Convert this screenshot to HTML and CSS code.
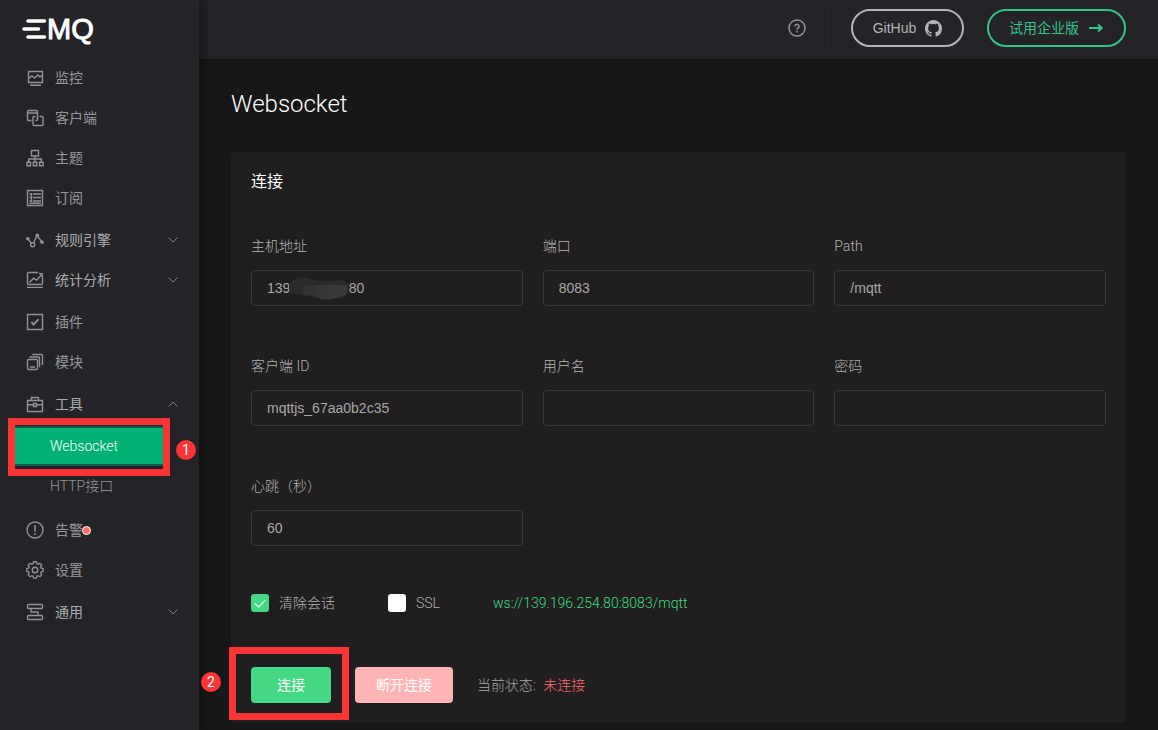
FILE: index.html
```html
<!DOCTYPE html>
<html lang="zh-CN">
<head>
<meta charset="utf-8">
<meta name="viewport" content="width=device-width, initial-scale=1">
<title>EMQ - Websocket</title>
<link rel="stylesheet" href="styles.css">
</head>
<body>
<aside class="sidebar">
  <a class="logo" href="#" aria-label="EMQ">
    <svg class="logo-bars" width="25" height="24" viewBox="0 0 25 24" stroke="#fff" stroke-width="3.600" stroke-linecap="round"><path d="M6 4H22.500M2 12H16.500M6 20H22.500"/></svg>
    <span class="logo-text">MQ</span>
  </a>
  <nav class="menu">
    <div class="group">
      <a class="item" href="#"><svg class="icon" viewBox="0 0 18 18"><path d="M2.500 2.500h14v11h-14zM2.500 9.500l3.500-2.500 2.500 2 3.500-3 2 2 2.500-2M4 16.200h11"/></svg><span>监控</span></a>
      <a class="item" href="#"><svg class="icon" viewBox="0 0 18 18"><path d="M5.500 11.500h-3a1 1 0 0 1-1-1v-8a1 1 0 0 1 1-1h8a1 1 0 0 1 1 1v8a1 1 0 0 1-1 1h-1M1.500 4h10M13.500 7.500h2.500a1 1 0 0 1 1 1v7a1 1 0 0 1-1 1h-8a1 1 0 0 1-1-1v-7a1 1 0 0 1 1-1h1.500"/></svg><span>客户端</span></a>
      <a class="item" href="#"><svg class="icon" viewBox="0 0 18 18"><path d="M5.500 1.500h7v5.500h-7zM9 7v6M2.700 13v-3h12.600v3M1 13.300h3.500v3.400H1zM7.300 13.300h3.500v3.400H7.300zM13.600 13.300h3.500v3.400h-3.500z"/></svg><span>主题</span></a>
      <a class="item" href="#"><svg class="icon" viewBox="0 0 18 18"><path d="M1.500 1.500h15v15h-15zM3.500 5h2M7 5h8M3.500 8.500h2M7 8.500h8M3.500 12h2M7 12h8M3.500 14.300h11.500M5.500 4v9"/></svg><span>订阅</span></a>
    </div>
    <div class="group">
      <a class="item parent" href="#"><svg class="icon" viewBox="0 0 18 18"><path d="M1.500 7.700l4.200 4.800M7.400 12l3.600-7.500 5 6.500"/><circle cx="6.700" cy="13.700" r="2"/><g fill="currentColor" stroke="none"><circle cx="1.800" cy="7.700" r="1.800"/><circle cx="11.300" cy="4.500" r="1.900"/><circle cx="16" cy="11.200" r="1.800"/></g></svg><span>规则引擎</span><svg class="chevron" viewBox="0 0 10 6"><path d="M.7.700L5 5 9.300.700"/></svg></a>
      <a class="item parent" href="#"><svg class="icon" viewBox="0 0 18 18"><path d="M12 1.500H2.500a1 1 0 0 0-1 1v10a1 1 0 0 0 1 1h13a1 1 0 0 0 1-1V6M1 16.400h16M3.500 11.500l4-4.300 3 2 5.500-6M13 2.500l3.300.3-.2 3.200"/></svg><span>统计分析</span><svg class="chevron" viewBox="0 0 10 6"><path d="M.7.700L5 5 9.300.700"/></svg></a>
    </div>
    <div class="group">
      <a class="item" href="#"><svg class="icon" viewBox="0 0 18 18"><path d="M1.500 1.500h15v15h-15z"/><path stroke-width="1.900" d="M5.300 9l2.400 2.500 4.800-5.300"/></svg><span>插件</span></a>
      <a class="item" href="#"><svg class="icon" viewBox="0 0 18 18"><path d="M2.500 6.500h8a1 1 0 0 1 1 1v8a1 1 0 0 1-1 1h-8a1 1 0 0 1-1-1v-8a1 1 0 0 1 1-1zM4 14h5M4 4.500v-.5h8.500a1 1 0 0 1 1 1v8.500h-.5M6.500 1.500h9a1 1 0 0 1 1 1V11h-1M6.500 1.500V2"/></svg><span>模块</span></a>
    </div>
    <div class="group">
      <a class="item parent open" href="#"><svg class="icon" viewBox="0 0 18 18"><path d="M1.500 5.500h15v11h-15zM5.500 5.500V2.500h7v3M1.500 9.800h5.500M11 9.800h5.500M7.500 8.500h3v3h-3z"/></svg><span>工具</span><svg class="chevron" viewBox="0 0 10 6"><path d="M.7 5.300L5 1l4.300 4.300"/></svg></a>
    </div>
    <div class="group submenu">
      <div class="marked">
        <a class="subitem active" href="#">Websocket</a>
        <span class="frame frame-menu"></span>
        <span class="step step-menu">1</span>
      </div>
      <a class="subitem" href="#">HTTP接口</a>
    </div>
    <div class="group">
      <a class="item" href="#"><svg class="icon" viewBox="0 0 18 18"><circle cx="9" cy="9" r="8"/><path stroke-width="1.600" d="M9 4v6.500M9 12.300v1.700"/></svg><span class="dotted">告警<i class="dot"></i></span></a>
      <a class="item" href="#"><svg class="icon" viewBox="0 0 18 18"><path d="M7.500 1.200h3l.5 2.100 1.300.6 1.900-1.100 2 2-1.100 1.900.6 1.300 2 .5v3l-2 .5-.6 1.300 1.100 1.900-2 2-1.900-1.100-1.300.6-.5 2h-3l-.5-2-1.300-.6-1.900 1.100-2-2 1.100-1.900-.6-1.300-2-.5v-3l2-.5.6-1.300-1.100-1.900 2-2 1.900 1.100 1.300-.6z" transform="translate(.5 -.4) scale(.94)"/><circle cx="9" cy="9" r="2.800"/></svg><span>设置</span></a>
    </div>
    <div class="group">
      <a class="item parent" href="#"><svg class="icon" viewBox="0 0 18 18"><rect x="1.500" y="1.500" width="15" height="4" rx="1"/><rect x="1.500" y="12.500" width="15" height="4" rx="1"/><path d="M5 5.500v3.500h7v3.500"/></svg><span>通用</span><svg class="chevron" viewBox="0 0 10 6"><path d="M.7.700L5 5 9.300.700"/></svg></a>
    </div>
  </nav>
</aside>
<div class="page">
  <header class="topbar">
    <button class="help" type="button" aria-label="帮助"><svg width="18" height="18" viewBox="0 0 18 18" fill="none" stroke="currentColor" stroke-width="1.500"><circle cx="9" cy="9" r="8"/><path d="M6.900 7.400a2.100 2 0 1 1 3.300 1.600c-.8.500-1.200.8-1.200 1.700M9 11.800v1.600"/></svg></button>
    <span class="divider"></span>
    <a class="pill pill-github" href="#">GitHub <svg width="17" height="17" viewBox="0 0 16 16" fill="currentColor"><path d="M8 0C3.580 0 0 3.580 0 8c0 3.540 2.290 6.530 5.470 7.590.4.070.55-.17.55-.38 0-.19-.01-.82-.01-1.490-2.010.37-2.530-.49-2.690-.94-.09-.23-.48-.94-.82-1.130-.28-.15-.68-.52-.01-.53.63-.01 1.080.58 1.230.82.72 1.210 1.870.87 2.330.66.070-.52.28-.87.51-1.070-1.780-.2-3.640-.89-3.640-3.950 0-.87.31-1.590.82-2.150-.08-.2-.36-1.020.08-2.120 0 0 .67-.21 2.200.82.640-.18 1.320-.27 2-.27s1.360.09 2 .27c1.530-1.040 2.200-.82 2.200-.82.440 1.100.160 1.920.080 2.120.510.560.820 1.270.820 2.150 0 3.070-1.870 3.750-3.650 3.950.290.250.540.730.540 1.480 0 1.070-.010 1.930-.010 2.200 0 .210.150.460.550.380A8.010 8.010 0 0 0 16 8c0-4.420-3.580-8-8-8z"/></svg></a>
    <a class="pill pill-trial" href="#">试用企业版 <svg width="16" height="12" viewBox="0 0 16 12" fill="none" stroke="currentColor" stroke-width="1.900"><path d="M1 6h12.500M10 2.500l3.800 3.500L10 9.500"/></svg></a>
  </header>
  <main class="main">
    <h1 class="title">Websocket</h1>
    <section class="card">
      <h2 class="card-title">连接</h2>
      <form>
        <div class="fields">
          <div class="field"><label for="host">主机地址</label>
            <div class="input-wrap"><input id="host" type="text" value="139.196.254.80">
            <svg class="smudge" width="62" height="26" viewBox="0 0 62 26"><path fill="#2b292a" d="M0 9Q3 2 14 1l12 3 14 1 13-1 7 4v8q-2 5-10 6l-10 2H34L18 20 6 18 0 17z"/><path fill="#333132" d="M14 9h13v11l-13-2z"/><path fill="#363435" d="M27 9h13v14h-7l-6-2z"/><path fill="#3a3839" d="M40 9h18v8q-3 4-10 5l-8 1z"/></svg></div></div>
          <div class="field"><label for="port">端口</label><input id="port" type="text" value="8083"></div>
          <div class="field"><label for="path">Path</label><input id="path" type="text" value="/mqtt"></div>
          <div class="field"><label for="client">客户端 ID</label><input id="client" type="text" value="mqttjs_67aa0b2c35"></div>
          <div class="field"><label for="user">用户名</label><input id="user" type="text"></div>
          <div class="field"><label for="pass">密码</label><input id="pass" type="password"></div>
          <div class="field"><label for="keep">心跳（秒）</label><input id="keep" type="text" value="60"></div>
        </div>
        <div class="options">
          <label class="check"><input type="checkbox" checked>清除会话</label>
          <label class="check"><input type="checkbox">SSL</label>
          <a class="url" href="#">ws://139.196.254.80:8083/mqtt</a>
        </div>
        <div class="actions">
          <div class="marked">
            <button class="btn btn-connect" type="button">连接</button>
            <span class="frame frame-connect"></span>
            <span class="step step-connect">2</span>
          </div>
          <button class="btn btn-disconnect" type="button">断开连接</button>
          <p class="status">当前状态: <span class="status-value">未连接</span></p>
        </div>
      </form>
    </section>
  </main>
</div>
</body>
</html>
```
FILE: styles.css
```css
* {
  box-sizing: border-box;
}

body {
  display: flex;
  min-height: 100vh;
  margin: 0;
  background: #171717;
  color: #a8a8a9;
  font: 400 14px/20px Roboto, "Noto Sans CJK SC", sans-serif;
}

a {
  color: inherit;
  text-decoration: none;
}

/* Sidebar */
.sidebar {
  position: relative;
  flex: 0 0 199px;
  background: #242428;
  box-shadow: 4px 0 10px rgba(0, 0, 0, 0.35);
}

.logo {
  display: flex;
  align-items: center;
  height: 58px;
  padding-left: 22px;
  color: #fff;
}

.logo-text {
  font: 400 29px/30px "Liberation Sans", Arial, sans-serif;
  -webkit-text-stroke: 1px #fff;
}

.menu {
  display: flex;
  flex-direction: column;
  gap: 2px;
}

.item {
  display: flex;
  align-items: center;
  gap: 11px;
  height: 40px;
  padding: 0 21px 0 26px;
  color: #98989b;
}

.parent {
  color: #acacae;
}

.icon {
  flex: none;
  width: 18px;
  height: 18px;
  color: #929295;
  fill: none;
  stroke: currentColor;
  stroke-width: 1.4;
}

.chevron {
  width: 10px;
  height: 6px;
  margin-left: auto;
  color: #858588;
  fill: none;
  stroke: currentColor;
}

.submenu {
  margin-bottom: 2px;
}

.subitem {
  display: block;
  height: 40px;
  padding-left: 50px;
  color: #98989b;
  font-weight: 300;
  line-height: 40px;
}

.active {
  margin: 0 36px 0 15px;
  padding-left: 35px;
  border-block: 2px solid #17594a;
  background: #00b173;
  color: #fff;
  line-height: 36px;
}

.dotted {
  position: relative;
}

.dot {
  position: absolute;
  top: 6px;
  right: -8px;
  width: 9px;
  height: 9px;
  border: 1px solid #fff;
  border-radius: 50%;
  background: #f56c6c;
}

/* Step markers */
.marked {
  position: relative;
}

.frame {
  position: absolute;
  border: 7px solid #fb3435;
  pointer-events: none;
}

.frame-menu {
  inset: -8px 29px -10px 8px;
}

.frame-connect {
  inset: -20px -18px -17px -22px;
}

.step {
  position: absolute;
  width: 20px;
  height: 20px;
  border-radius: 50%;
  background: #fb3435;
  color: #fff;
  text-align: center;
}

.step-menu {
  top: 14px;
  right: 3px;
}

.step-connect {
  top: 5px;
  left: -50px;
}

/* Header */
.page {
  flex: 1;
  min-width: 0;
}

.topbar {
  display: flex;
  align-items: center;
  justify-content: flex-end;
  height: 59px;
  padding: 0 32px 3px 0;
  background: #242428;
}

.help {
  display: flex;
  padding: 0;
  border: 0;
  background: none;
  color: #929295;
}

.divider {
  width: 1px;
  height: 34px;
  margin: 0 23px 0 21px;
  background: #2c2c30;
}

.pill {
  display: flex;
  align-items: center;
  justify-content: center;
  gap: 9px;
  height: 38px;
  border: 2px solid #b4b4b6;
  border-radius: 19px;
  color: #b4b4b6;
  font-family: "Liberation Sans", Arial, "Noto Sans CJK SC", sans-serif;
}

.pill-github {
  width: 113px;
}

.pill-trial {
  width: 139px;
  margin-left: 23px;
  border-color: #34c388;
  color: #34c388;
}

/* Content */
.main {
  padding: 31px 32px 7px;
}

.title {
  margin: 0 0 34px;
  color: #fff;
  font-size: 24px;
  font-weight: 300;
  line-height: 28px;
}

.card {
  padding: 20px;
  border-radius: 4px;
  background: #201e1f;
}

.card-title {
  margin: 0 0 44px;
  color: #fff;
  font-size: 16px;
  font-weight: 400;
  line-height: 20px;
}

.fields {
  display: grid;
  grid-template-columns: repeat(3, 1fr);
  gap: 50px 20px;
}

.field {
  display: flex;
  flex-direction: column;
  gap: 14px;
  color: #b4b4b5;
  font-weight: 300;
}

.field input {
  width: 100%;
  height: 36px;
  padding: 0 15px;
  border: 1px solid #3a393a;
  border-radius: 4px;
  outline: 0;
  background: transparent;
  color: #a8a8a9;
  font: 14px "Liberation Sans", Arial, sans-serif;
}

.input-wrap {
  position: relative;
  display: flex;
}

.smudge {
  position: absolute;
  top: 6px;
  left: 38px;
}

.options {
  display: flex;
  align-items: center;
  gap: 53px;
  margin: 48px 0 55px;
  line-height: 18px;
}

.check {
  display: flex;
  align-items: center;
  gap: 10px;
  color: #b4b4b5;
  font-weight: 300;
}

.check input {
  display: grid;
  place-items: center;
  width: 18px;
  height: 18px;
  margin: 0;
  border-radius: 3px;
  appearance: none;
  background: #fff;
}

.check input:checked {
  background: #44d884;
}

.check input:checked::after {
  width: 9px;
  height: 5px;
  margin-bottom: 3px;
  border: solid #fff;
  border-width: 0 0 1px 1px;
  content: "";
  transform: rotate(-45deg);
}

.url {
  color: #3ddc84;
  font-weight: 300;
}

.actions {
  display: flex;
  align-items: center;
  gap: 24px;
}

.btn {
  display: block;
  height: 36px;
  padding: 0;
  border: 0;
  border-radius: 4px;
  color: #fff;
  font: inherit;
}

.btn-connect {
  width: 80px;
  background: #44d884;
}

.btn-disconnect {
  width: 98px;
  background: #ffb5b5;
}

.status {
  margin: 0;
  font-weight: 300;
}

.status-value {
  margin-left: 4px;
  color: #ff6d6d;
}
```
